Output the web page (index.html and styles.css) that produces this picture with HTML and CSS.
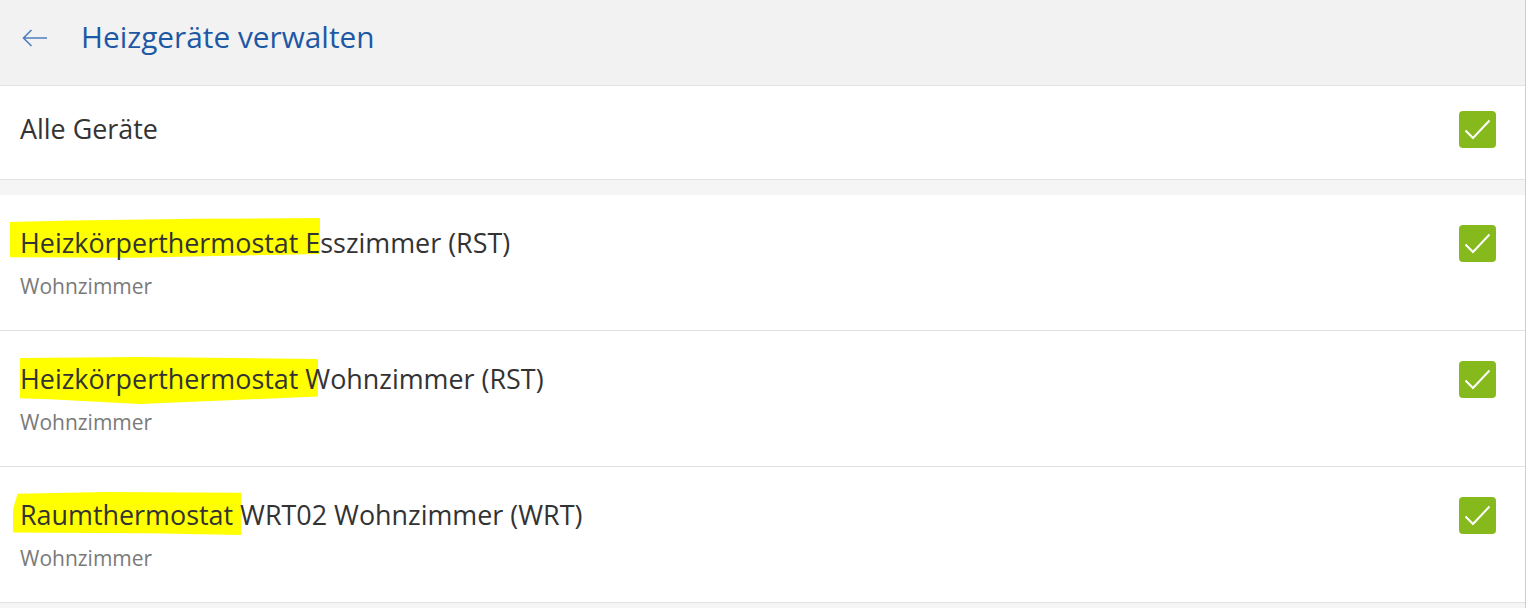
FILE: index.html
```html
<!DOCTYPE html>
<html lang="de">
<head>
<meta charset="utf-8">
<title>Heizgeräte verwalten</title>
<link rel="stylesheet" href="styles.css">
</head>
<body>
<div class="app">
  <header class="header">
    <svg class="back" width="26" height="18" viewBox="0 0 26 18" aria-hidden="true">
      <path d="M25 9H1.5M9.5 1L1.5 9l8 8" fill="none" stroke="#4f7fbd" stroke-width="1.6"/>
    </svg>
    <h1 class="title">Heizgeräte verwalten</h1>
  </header>

  <div class="row row-all">
    <span class="name">Alle Geräte</span>
    <span class="check"><svg width="37" height="37" viewBox="0 0 37 37"><path d="M6.5 19.5l7.5 7.5L30.5 9.5" fill="none" stroke="#fff" stroke-width="2"/></svg></span>
  </div>

  <div class="gap"></div>

  <div class="row device">
    <div class="info">
      <div class="name"><span class="hl hl1">Heizkörperthermostat </span>Esszimmer (RST)</div>
      <div class="room">Wohnzimmer</div>
    </div>
    <span class="check"><svg width="37" height="37" viewBox="0 0 37 37"><path d="M6.5 19.5l7.5 7.5L30.5 9.5" fill="none" stroke="#fff" stroke-width="2"/></svg></span>
  </div>

  <div class="row device">
    <div class="info">
      <div class="name"><span class="hl hl2">Heizkörperthermostat </span>Wohnzimmer (RST)</div>
      <div class="room">Wohnzimmer</div>
    </div>
    <span class="check"><svg width="37" height="37" viewBox="0 0 37 37"><path d="M6.5 19.5l7.5 7.5L30.5 9.5" fill="none" stroke="#fff" stroke-width="2"/></svg></span>
  </div>

  <div class="row device">
    <div class="info">
      <div class="name"><span class="hl hl3">Raumthermostat </span>WRT02 Wohnzimmer (WRT)</div>
      <div class="room">Wohnzimmer</div>
    </div>
    <span class="check"><svg width="37" height="37" viewBox="0 0 37 37"><path d="M6.5 19.5l7.5 7.5L30.5 9.5" fill="none" stroke="#fff" stroke-width="2"/></svg></span>
  </div>
</div>
</body>
</html>
```

FILE: styles.css
```css
* { box-sizing: border-box; }

html, body {
  margin: 0;
  padding: 0;
  background: #ffffff;
}

body {
  font-family: "Open Sans", "Liberation Sans", sans-serif;
  color: #333333;
}

.app {
  width: 1526px;
  min-height: 608px;
  background: #f5f5f5;
  border-right: 1px solid #cfcfcf;
}

.header {
  height: 86px;
  background: #f2f2f2;
  border-bottom: 1px solid #e2e2e2;
  display: flex;
  align-items: center;
  padding: 0 0 11px 22px;
}

.back {
  display: block;
  flex: none;
  margin-top: 1px;
}

.title {
  margin: 0 0 0 33px;
  font-size: 29.8px;
  font-weight: 400;
  line-height: 38px;
  color: #1d58a4;
}

.row {
  background: #ffffff;
  border-bottom: 1px solid #e2e2e2;
  display: flex;
  padding: 0 29px 0 20px;
}

.row-all {
  height: 94px;
  align-items: center;
  padding-bottom: 7px;
}

.gap {
  height: 15px;
  background: #f5f5f5;
}

.device {
  height: 136px;
  align-items: flex-start;
  padding-top: 32px;
}

.info {
  flex: 1;
}

.name {
  position: relative;
  z-index: 0;
  font-size: 26.9px;
  line-height: 32px;
  color: #333333;
}

.row-all .name {
  flex: 1;
}

.room {
  margin-top: 15px;
  font-size: 21px;
  line-height: 24px;
  color: #7a7a7a;
}

.check {
  flex: none;
  width: 37px;
  height: 37px;
  border-radius: 4px;
  background: #86b91c;
  display: block;
}

.device .check {
  margin-top: -2px;
}

.check svg {
  display: block;
}

.hl {
  position: relative;
}

.hl::before {
  content: "";
  position: absolute;
  z-index: -1;
  background: #ffff00;
}

.hl1::before {
  top: -6px;
  bottom: 2px;
  left: -10px;
  right: -15px;
  clip-path: polygon(0 10%, 20% 6%, 60% 2%, 100% 0, 100% 88%, 70% 92%, 40% 97%, 0 96%);
}

.hl2::before {
  top: -3px;
  bottom: -7px;
  left: 0;
  right: -13px;
  clip-path: polygon(0 2%, 40% 0, 100% 4%, 100% 84%, 70% 92%, 40% 100%, 10% 90%, 0 88%);
}

.hl3::before {
  top: -4px;
  bottom: -2px;
  left: -7px;
  right: -1px;
  clip-path: polygon(2% 4%, 40% 0, 100% 2%, 100% 100%, 60% 96%, 0 94%, 0 40%);
}
```
